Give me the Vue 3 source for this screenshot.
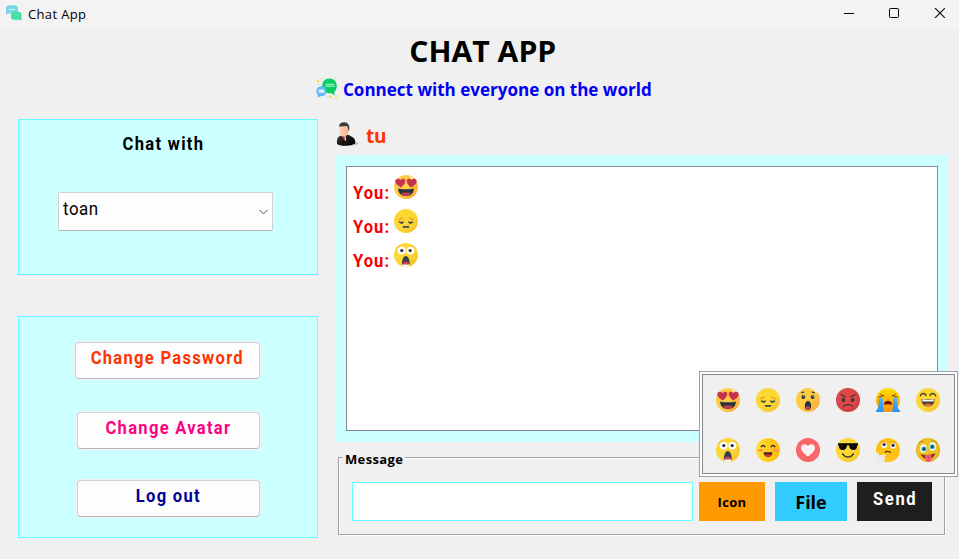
<script setup>
import { ref } from 'vue'

const picker = ['love', 'sad', 'wow', 'angry', 'cry', 'laugh', 'shock', 'blush', 'heart', 'cool', 'think', 'crazy']
const messages = ref([
  { id: 1, emoji: 'love' },
  { id: 2, emoji: 'sad' },
  { id: 3, emoji: 'shock' },
])
</script>

<template>
  <div class="window">
    <svg class="sprite" width="0" height="0" aria-hidden="true">
      <defs>
        <linearGradient id="g-y" x1="0" y1="0" x2="1" y2="1"><stop offset=".55" stop-color="#fdd835" /><stop offset="1" stop-color="#efbf22" /></linearGradient>
        <linearGradient id="g-o" x1="0" y1="0" x2="1" y2="1"><stop offset=".5" stop-color="#ffcc48" /><stop offset="1" stop-color="#f5a530" /></linearGradient>
        <linearGradient id="g-c" x1="0" y1="0" x2="0" y2="1"><stop offset="0" stop-color="#ffe000" /><stop offset="1" stop-color="#ff8f00" /></linearGradient>
        <linearGradient id="g-t" x1="0" y1="0" x2="0" y2="1"><stop offset="0" stop-color="#55aef0" /><stop offset="1" stop-color="#2196f8" /></linearGradient>
        <linearGradient id="g-b" x1="0" y1="0" x2="1" y2="0"><stop offset="0" stop-color="#ffe13a" /><stop offset="1" stop-color="#fcb908" /></linearGradient>
        <linearGradient id="g-s" x1="0" y1="0" x2="1" y2="1"><stop offset="0" stop-color="#444" /><stop offset=".5" stop-color="#151515" /><stop offset="1" stop-color="#000" /></linearGradient>
        <linearGradient id="g-f" x1="0" y1="0" x2="1" y2="0"><stop offset="0" stop-color="#ffd9bd" /><stop offset="1" stop-color="#f6ae86" /></linearGradient>
      </defs>
      <symbol id="e-love" viewBox="0 0 24 24">
        <circle cx="12" cy="12" r="12" fill="url(#g-o)" />
        <path d="M15 1.2 Q18.5 2 20.5 4.4 L17 3.5Z" fill="#fff3c8" />
        <path d="M6.8 12.4C3 10.4 .9 8.2 1.3 5.8 1.8 3.4 5 3.1 6.4 5.2 7.5 3 11 3.1 11.3 5.6 11.6 8.2 9.3 10.8 6.8 12.4Z" fill="#c5324e" />
        <path d="M17.2 12.4C14.7 10.8 12.4 8.2 12.7 5.6 13 3.1 16.5 3 17.6 5.2 19 3.1 22.2 3.4 22.7 5.8 23.1 8.2 21 10.4 17.2 12.4Z" fill="#c5324e" />
        <path d="M4.2 13.4Q12 15.2 19.8 13.4C20 18 17 20.8 12 20.8S4 18 4.2 13.4Z" fill="#27333e" />
        <path d="M6.8 18.6Q8.8 17 12 17.6 15.2 17 17.2 18.6 15.4 20.8 12 20.8T6.8 18.6Z" fill="#c43a51" />
      </symbol>
      <symbol id="e-sad" viewBox="0 0 24 24">
        <circle cx="12" cy="12" r="12" fill="url(#g-y)" />
        <path d="M4.3 10.8Q7 10.2 8.6 8.3M19.7 10.8Q17 10.2 15.4 8.3" fill="none" stroke="#dba01d" stroke-width="1.2" />
        <path d="M4.9 12.7Q7 14.2 9.8 12.9M14.2 12.9Q17 14.2 19.1 12.7" fill="none" stroke="#414751" stroke-width="1.3" />
        <path d="M6.5 13.7h2.4v1H6.5zM15.2 13.7h2.4v1h-2.4z" fill="#414751" />
        <rect x="8.8" y="17.1" width="6.4" height="1.7" rx=".6" fill="#414751" />
      </symbol>
      <symbol id="e-wow" viewBox="0 0 24 24">
        <circle cx="12" cy="12" r="12" fill="url(#g-o)" />
        <path d="M14 1Q19 1.8 21.5 5.5L18 3.5Z" fill="#fff0bd" />
        <path d="M5.2 5.2Q6.6 3.8 8.5 4.3M15.5 4.3Q17.4 3.8 18.8 5.2" fill="none" stroke="#413b36" stroke-width="1.1" />
        <circle cx="7.4" cy="9" r="1.9" fill="#27333e" /><circle cx="16.6" cy="9" r="1.9" fill="#27333e" />
        <circle cx="7.8" cy="8.3" r=".55" fill="#fff" /><circle cx="17" cy="8.3" r=".55" fill="#fff" />
        <path d="M12 13C14.2 13 15.1 15.6 15.1 18.2S14 21.8 12 21.8 8.9 20.8 8.9 18.2 9.8 13 12 13Z" fill="#27333e" />
        <ellipse cx="12" cy="19.9" rx="2.1" ry="1.8" fill="#ce4059" />
      </symbol>
      <symbol id="e-angry" viewBox="0 0 24 24">
        <circle cx="12" cy="12" r="12" fill="#d03e42" />
        <circle cx="11.2" cy="11" r="10.4" fill="#de4848" />
        <path d="M4.5 6.4 9.7 9.1M19.5 6.4 14.3 9.1" stroke="#3d3836" stroke-width="1.2" />
        <circle cx="7.4" cy="12" r="1.9" fill="#3d3836" /><circle cx="16.6" cy="12" r="1.9" fill="#3d3836" />
        <path d="M7.4 18.5C9.2 15.9 14.8 15.9 16.6 18.5" fill="none" stroke="#3d3836" stroke-width="1.3" stroke-linecap="round" />
      </symbol>
      <symbol id="e-cry" viewBox="0 0 24 24">
        <circle cx="12" cy="12" r="12" fill="url(#g-c)" />
        <path d="M2.5 9 7.9 7.4M16.1 7.4 21.5 9M4.4 6l3.6 2.4M19.6 6l-3.6 2.4" stroke="#7a4709" stroke-width="1" />
        <path d="M3 9.8Q5 9 6.8 9.8L7.2 22Q8 22.6 8.5 24H0V22.6Q2 21.6 2.6 18ZM21 9.8Q19 9 17.2 9.8L16.8 22Q16 22.6 15.5 24H24V22.6Q22 21.6 21.4 18Z" fill="url(#g-t)" />
        <path d="M7.8 16.8C8 14.2 9.8 12.7 12 12.7S16 14.2 16.2 16.8Q12 15.8 7.8 16.8Z" fill="#6e1412" />
      </symbol>
      <symbol id="e-laugh" viewBox="0 0 24 24">
        <circle cx="12" cy="12" r="12" fill="url(#g-y)" />
        <path d="M4.4 7.8C5.6 4.8 8.8 4.8 10 7.4M14 7.4C15.2 4.8 18.4 4.8 19.6 7.8" fill="none" stroke="#443e32" stroke-width="1.4" stroke-linecap="round" />
        <path d="M5.4 10.9Q12 11.7 18.6 10.9C18.7 15.4 16 18.4 12 18.4S5.3 15.4 5.4 10.9Z" fill="#443e38" />
        <path d="M6 11.3Q12 12 18 11.3L17.6 13.6H6.5Z" fill="#fff" />
        <path d="M8.2 16.8Q12 14.4 15.8 16.8 14.3 18.2 12 18.2T8.2 16.8Z" fill="#f3703e" />
      </symbol>
      <symbol id="e-shock" viewBox="0 0 24 24">
        <circle cx="12" cy="12" r="12" fill="url(#g-y)" />
        <path d="M2.7 5.2Q4 3.1 6.4 3M17.6 3Q20 3.1 21.3 5.2" fill="none" stroke="#e2a62e" stroke-width=".9" />
        <circle cx="7.6" cy="7.6" r="3.9" fill="#fff" /><circle cx="16.4" cy="7.6" r="3.9" fill="#fff" />
        <circle cx="7.8" cy="7.6" r="1.7" fill="#303847" /><circle cx="16.2" cy="7.6" r="1.7" fill="#303847" />
        <path d="M11.8 13C14.9 13 16 18.5 15.7 22.6H7.9C7.6 18.5 8.8 13 11.8 13Z" fill="#39404c" />
        <path d="M8.3 21.6Q8.6 18.9 11.8 18.7T15.3 21.6Z" fill="#e04055" />
        <path d="M8 21.6H15.7L15.2 23.4H8.5Z" fill="#fff" />
      </symbol>
      <symbol id="e-blush" viewBox="0 0 24 24">
        <circle cx="12" cy="12" r="12" fill="url(#g-b)" />
        <path d="M4.9 9.2Q7 5.6 9.1 9.2M14.9 9.2Q17 5.6 19.1 9.2" fill="none" stroke="#33322e" stroke-width="1.5" />
        <ellipse cx="4.5" cy="12.4" rx="2.3" ry="1.1" fill="#ff8060" /><ellipse cx="19.5" cy="12.4" rx="2.3" ry="1.1" fill="#ff8060" />
        <path d="M7.5 14.3H16.5C16.2 17.5 14.6 19.1 12 19.1S7.8 17.5 7.5 14.3Z" fill="#3e251f" />
        <path d="M8.8 17.1Q12 15.2 15.2 17.1 14 19 12 19T8.8 17.1Z" fill="#f32938" />
      </symbol>
      <symbol id="e-heart" viewBox="0 0 24 24">
        <circle cx="12" cy="12" r="12" fill="#f96669" />
        <path d="M12 18.4C7.3 15 4.7 12.4 5 9.2 5.4 5.9 9.9 5 12 7.8 14.1 5 18.6 5.9 19 9.2 19.3 12.4 16.7 15 12 18.4Z" fill="#fff0f2" />
      </symbol>
      <symbol id="e-cool" viewBox="0 0 24 24">
        <circle cx="12" cy="12" r="12" fill="url(#g-y)" />
        <path d="M2 5.3H22V7L21.2 7.5C21 10.5 19.9 12 17.3 12 14.6 12 13.4 10.4 13 7.3H11C10.6 10.4 9.4 12 6.7 12 4.1 12 3 10.5 2.8 7.5L2 7Z" fill="#080808" />
        <path d="M5.1 7 7 9M15.9 7 17.8 9" stroke="#383838" />
        <path d="M6.6 15.8C9 20.1 15 20.1 17.4 15.8" fill="none" stroke="#24221c" stroke-width="1.3" stroke-linecap="round" />
      </symbol>
      <symbol id="e-think" viewBox="0 0 24 24">
        <circle cx="12" cy="12" r="12" fill="#ffc118" />
        <path d="M4.2 4.3Q6 2.7 8.4 3.4M14 4Q17.5 2.7 19.7 4.9" fill="none" stroke="#da9611" stroke-width=".8" />
        <circle cx="8.2" cy="7.2" r="2.7" fill="#fff" /><circle cx="17.1" cy="8" r="2.7" fill="#fff" />
        <circle cx="8.1" cy="6.5" r="1.6" fill="#20284d" /><circle cx="17.1" cy="7.3" r="1.6" fill="#20284d" />
        <path d="M8.8 14.4Q12.2 12.2 14.8 14.8" fill="none" stroke="#4c3417" stroke-width="1.4" />
        <path d="M.4 14.8Q1.7 13.5 2.4 15.6L3.4 17.3 9.6 16.2Q11.1 16.5 9.9 17.6L7.5 18.5Q9.5 18.4 9.4 19.8 9.5 22.3 7.2 23.4L3.2 24H.2Z" fill="#e9e9ef" />
      </symbol>
      <symbol id="e-crazy" viewBox="0 0 24 24">
        <circle cx="12" cy="12" r="12" fill="#e0ae1d" />
        <circle cx="11.6" cy="11.5" r="11.2" fill="#efc01f" />
        <path d="M3 5.3Q4.5 2.7 7.5 3.4M15.5 3.2Q18.5 1.8 20.8 4.8" fill="none" stroke="#bb801d" stroke-width="1" />
        <ellipse cx="7.4" cy="10.4" rx="3.3" ry="4.2" fill="#f3ffff" /><ellipse cx="16.6" cy="8.5" rx="3.3" ry="4.2" fill="#f3ffff" />
        <circle cx="7.9" cy="10.9" r="2.5" fill="#36aac0" /><circle cx="16.3" cy="8.7" r="2.5" fill="#36aac0" />
        <circle cx="8" cy="10.9" r="1.3" fill="#123845" /><circle cx="16.3" cy="8.7" r="1.3" fill="#123845" />
        <path d="M4.8 16.2Q12 18 19.3 15.3 18 20.8 12 21.2 6.6 21 4.8 16.2Z" fill="#84332a" />
        <path d="M8.8 17.2 15.5 16.7 15.3 21.7C14.8 24.6 10.2 24.8 9.5 22Z" fill="#f55a77" />
        <path d="M12.2 18V22" stroke="#d63e60" stroke-width=".7" />
      </symbol>
    </svg>

    <header class="titlebar">
      <svg class="app-icon" viewBox="0 0 16 16">
        <path d="M3 .3H8.5C10.8 .3 12 2 12 4V8.5H2.5L0 9.8V4Q0 .3 3 .3Z" fill="#78d5ea" />
        <path d="M3 4.5H9" stroke="#c9f5fb" />
        <path d="M7.8 6.8H12.2Q15.5 6.8 15.5 10V15.6L13.5 14.8H8Q4.8 14.5 4.8 11T7.8 6.8Z" fill="#47dfa0" />
      </svg>
      <span class="app-name">Chat App</span>
      <svg class="controls" viewBox="0 0 101 10">
        <path d="M0 5.5H10" stroke="#000" />
        <rect x="45.5" y=".5" width="9" height="9" rx=".8" fill="none" stroke="#000" />
        <path d="M91 0 101 10M101 0 91 10" stroke="#111" stroke-width="1.1" />
      </svg>
    </header>

    <h1 class="title"><span>CHAT APP</span></h1>
    <div class="tagline">
      <svg class="tag-icon" viewBox="0 0 22 21">
        <path d="M13.6 .6C18 .6 20.8 3.6 20.8 8 20.8 10.5 20 12.5 18.3 13.9L18.6 17.4 15.2 15.2C9.8 16 6.2 12.8 6.2 8.2S9 .6 13.6 .6Z" fill="#08cf65" />
        <path d="M9.5 6.3H18.5M9.5 8.2H18.5" stroke="#b8f6d1" stroke-width="1" />
        <path d="M5.4 8.3C8.5 8.3 10.4 10.5 10.4 13.2S8.5 18 5.6 18L1.3 19.4 1.8 16.8C-1.2 13.4 .8 8.3 5.4 8.3Z" fill="#5fb8fb" />
        <path d="M2.5 11.5H8.2V14.9H2.5Z" fill="#d7efff" />
        <path d="M1 3.2H3M2 2.2V4.2M13 18.8H15.2M14.1 17.7V20M19.2 19.8H21" stroke="#ffce22" stroke-width="1.3" />
        <path d="M5 .5H6M10 19.5H11M2 6.5H3M19 .5H20" stroke="#83d8f5" />
      </svg>
      <span>Connect with everyone on the world</span>
    </div>

    <main class="content">
      <aside class="side">
        <section class="panel chat-with">
          <h2><span class="din">Chat with</span></h2>
          <div class="combo">
            <span>toan</span>
            <svg viewBox="0 0 9 6"><path d="M.5 1 4.5 5 8.5 1" fill="none" stroke="#555" /></svg>
          </div>
        </section>
        <section class="panel actions">
          <button class="action password"><span class="din">Change Password</span></button>
          <button class="action avatar"><span class="din">Change Avatar</span></button>
          <button class="action logout"><span class="din">Log out</span></button>
        </section>
      </aside>

      <section class="talk">
        <div class="user">
          <svg viewBox="0 0 23 24">
            <ellipse cx="13" cy="21.5" rx="9.5" ry="2" fill="#bdbdbd" />
            <path d="M1 22Q.2 15.5 4 14L8 12.5 13 13 17 15.5Q19.6 17 19.2 21.5 15 24 9 23.8 3.5 23.8 1 22Z" fill="url(#g-s)" />
            <path d="M5.2 13 9.4 12.6 10.2 19.5Z" fill="#eef1f5" />
            <path d="M7 14 8.5 14 9 19.5 7.4 17Z" fill="#cf1c20" />
            <path d="M3.2 4Q8 2 12.4 4.5L12.6 9.5Q11.5 14.5 8 14.5 3.2 13.4 3 8Z" fill="url(#g-f)" />
            <path d="M3 4.4Q3.5.4 8.3.3 14 .5 13.2 8L12.4 8.7Q12.5 5.5 11 4 7 4.6 3 4.4Z" fill="#383a3b" />
          </svg>
          <span>tu</span>
        </div>

        <div class="log-frame">
          <div class="log">
            <div v-for="m in messages" :key="m.id" class="row">
              <div class="who"><span class="din">You:</span></div>
              <svg class="emoji"><use :href="'#e-' + m.emoji" /></svg>
            </div>
          </div>
        </div>

        <div class="composer">
          <span class="legend">Message</span>
          <input class="field" type="text" />
          <button class="btn icon">Icon</button>
          <button class="btn file">File</button>
          <button class="btn send"><span class="din">Send</span></button>
          <div class="popup">
            <div class="grid">
              <svg v-for="e in picker" :key="e" class="emoji"><use :href="'#e-' + e" /></svg>
            </div>
          </div>
        </div>
      </section>
    </main>
  </div>
</template>

<style>
body { background: #f0f0f0; }
</style>

<style scoped>
* { box-sizing: border-box; }
.window {
  width: 959px; height: 559px; overflow: hidden; background: #f0f0f0; color: #000;
  font-family: "Open Sans", sans-serif;
}
.sprite { position: absolute; }
svg { display: block; flex: none; }
h1, h2 { margin: 0; }
button, input { margin: 0; padding: 0; border: 0; border-radius: 0; outline: 0; }
/* Condensed, widely tracked face for the labels and buttons */
.din { display: inline-block; font-family: Roboto, sans-serif; font-weight: 700; letter-spacing: 1.4px; white-space: nowrap; transform: scaleX(.92); }

.titlebar { display: flex; height: 28px; padding: 0 14px 0 6px; background: #f3f3f3; }
.app-icon { width: 16px; height: 16px; margin-top: 5px; }
.app-name { margin-left: 6px; font-size: 13px; line-height: 28px; letter-spacing: .35px; white-space: nowrap; }
.controls { width: 101px; height: 10px; margin: 8px 0 0 auto; }

.title { height: 45px; padding-left: 7px; text-align: center; font-size: 29px; line-height: 45px; font-weight: 700; white-space: nowrap; }
.title span { display: inline-block; transform: scaleX(1.04); }
.tagline {
  display: flex; height: 32px; padding-left: 316px; color: #0000f5;
  font-size: 18px; font-weight: 700; line-height: 32px; white-space: nowrap;
}
.tagline span { transform: scaleX(.946); transform-origin: left; }
.tag-icon { width: 22px; height: 21px; margin: 5px 5px 0 0; }

.content { display: flex; gap: 18px; padding: 14px 0 0 18px; }
.side { display: flex; flex-direction: column; gap: 41px; width: 300px; }
.panel { background: #ccffff; border: 1px solid #66ffff; font-family: Roboto, sans-serif; }
.chat-with { height: 156px; padding: 9px 39px 0; }
.chat-with h2 { height: 30px; padding-right: 9px; text-align: center; font-size: 18px; line-height: 30px; }
.combo {
  display: flex; justify-content: space-between; width: 215px; height: 39px; margin-top: 33px; padding: 0 4px;
  background: #fdfdfd; border: 1px solid #d0d0d0; border-bottom-color: #b8b8b8; border-radius: 2px;
  font-size: 19px; line-height: 32px; letter-spacing: .6px;
}
.combo span { transform: scaleX(.89); transform-origin: left; }
.combo svg { width: 9px; height: 6px; margin-top: 16px; }
.actions { display: flex; flex-direction: column; align-items: flex-end; height: 222px; padding: 25px 57px 0 0; }
.action {
  width: 183px; height: 37px; padding-bottom: 5px; background: #fdfdfd;
  border: 1px solid #d0d0d0; border-bottom-color: #b8b8b8; border-radius: 4px; box-shadow: 0 0 0 1px #f0f0f0;
  font-family: Roboto, sans-serif; font-size: 18px; line-height: 30px;
}
.password { width: 185px; color: #ff3300; }
.avatar { margin-top: 33px; color: #ff0084; }
.logout { margin-top: 31px; color: #000099; }

.talk { width: 612px; }
.user { display: flex; height: 36px; color: #ff3300; font-size: 19px; line-height: 35px; font-weight: 700; letter-spacing: -.3px; }
.user svg { width: 23px; height: 24px; margin: 3px 7px 0 0; }
.log-frame { height: 287px; padding: 11px 10px; background: #ccffff; }
.log { height: 265px; padding: 3px 6px; background: #fff; border: 1px solid #828790; }
.row { display: flex; height: 34px; padding-top: 5px; }
.who { width: 41px; color: #f50000; font-size: 18px; line-height: 34px; }
.who .din { letter-spacing: 1.1px; transform-origin: left; }
.emoji { width: 24px; height: 24px; }

.composer {
  position: relative; display: flex; width: 607px; height: 78px; margin: 15px 0 0 2px; padding: 24px 0 0 13px;
  border: 1px solid #a0a0a0; box-shadow: 1px 1px #fff, inset 1px 1px #fff;
}
.legend {
  position: absolute; left: 4px; top: -10px; width: 62px; padding-left: 2px; background: #f0f0f0;
  font-size: 13px; font-weight: 700; line-height: 22px; letter-spacing: .35px; white-space: nowrap;
}
.field { width: 341px; height: 39px; margin-right: 6px; border: 1px solid #66ffff; background: #fff; }
.btn { height: 39px; font-family: "Open Sans", sans-serif; font-weight: 700; color: #000; white-space: nowrap; }
.icon { width: 66px; background: #ff9900; font-size: 13px; letter-spacing: .3px; }
.file { width: 72px; margin-left: 10px; background: #33ccff; font-size: 18px; }
.send { width: 75px; margin-left: 10px; padding: 0 0 7px 1px; background: #1e1e1e; color: #fff; font-size: 18px; }
.send .din { letter-spacing: 1.8px; }

.popup {
  position: absolute; left: 360px; top: -87px; width: 259px; height: 106px; padding: 2px;
  background: #fff; border: 1px solid #a0a0a0;
}
.grid {
  display: grid; grid-template-columns: repeat(6, 24px); gap: 26px 16px; height: 100px; padding: 13px;
  background: #f0f0f0; border: 1px solid #828790;
}
</style>
